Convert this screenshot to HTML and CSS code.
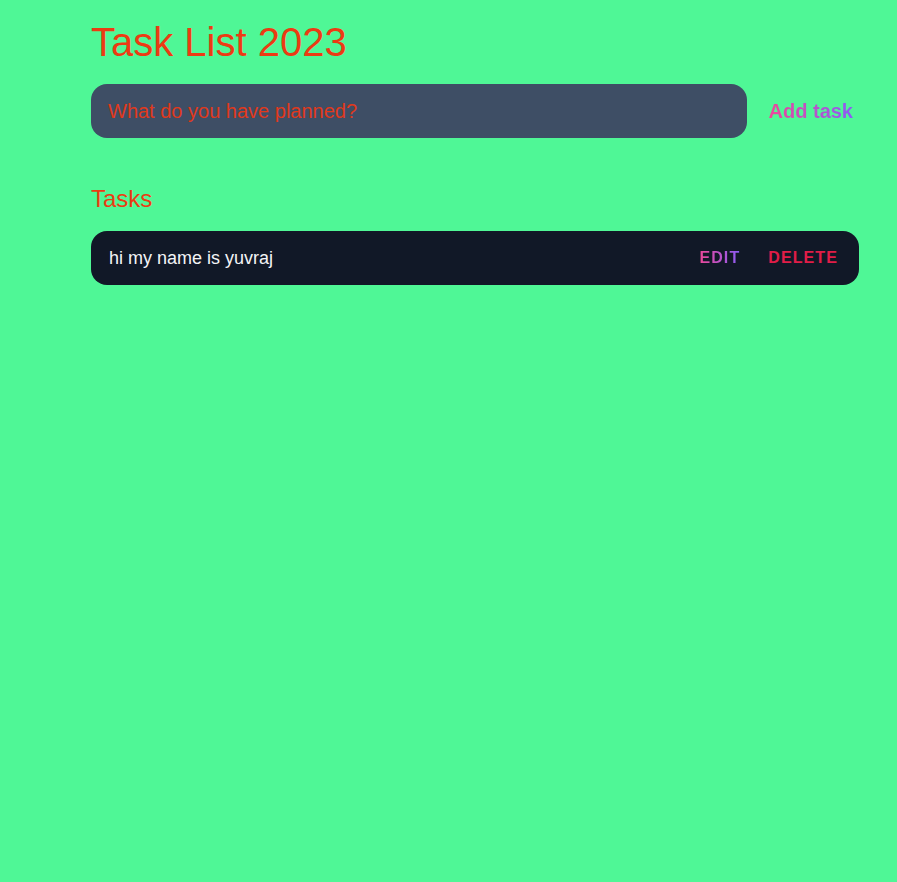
FILE: index.html
```html
<!DOCTYPE html>
<html lang="en">
<head>
<meta charset="utf-8">
<title>Task List 2023</title>
<link rel="stylesheet" href="styles.css">
</head>
<body>
<main class="app">
  <h1 class="title">Task List 2023</h1>
  <form class="new-task" onsubmit="return false">
    <input class="new-task-input" type="text" placeholder="What do you have planned?">
    <button class="new-task-submit" type="submit"><span class="gradient">Add task</span></button>
  </form>
  <section class="task-list">
    <h2 class="section-title">Tasks</h2>
    <div class="tasks">
      <div class="task">
        <div class="task-text">hi my name is yuvraj</div>
        <div class="actions">
          <button class="action edit"><span class="gradient">Edit</span></button>
          <button class="action delete">Delete</button>
        </div>
      </div>
    </div>
  </section>
</main>
</body>
</html>
```
FILE: styles.css
```css
html, body {
  margin: 0;
  padding: 0;
  background: #4ff796;
  font-family: "Liberation Sans", Arial, sans-serif;
}
.app {
  width: 768px;
  margin-left: 91px;
  padding-top: 19px;
}
.title {
  margin: 0;
  font-size: 40px;
  font-weight: 400;
  line-height: 46px;
  color: #ec3b13;
}
.new-task {
  display: flex;
  align-items: center;
  margin-top: 19px;
}
.new-task-input {
  flex: 1;
  min-width: 0;
  height: 54px;
  box-sizing: border-box;
  border: none;
  outline: none;
  border-radius: 16px;
  background: #3e4e65;
  padding: 0 17px;
  font-family: inherit;
  font-size: 20px;
  color: #f3f4f6;
}
.new-task-input::placeholder {
  color: #e0391c;
  opacity: 1;
}
.new-task-submit {
  border: none;
  background: none;
  margin-left: 22px;
  padding: 0 6px 0 0;
  font-family: inherit;
  font-size: 20px;
  font-weight: 700;
  cursor: pointer;
}
.gradient {
  background: linear-gradient(to right, #ec4899, #8b5cf6);
  -webkit-background-clip: text;
  background-clip: text;
  color: transparent;
}
.task-list {
  margin-top: 47px;
}
.section-title {
  margin: 0;
  font-size: 24px;
  font-weight: 400;
  line-height: 28px;
  color: #ec3b13;
}
.tasks {
  margin-top: 18px;
}
.task {
  display: flex;
  align-items: center;
  justify-content: space-between;
  height: 54px;
  box-sizing: border-box;
  padding: 0 21px 0 18px;
  background: #111827;
  border-radius: 16px;
}
.task-text {
  font-size: 18px;
  color: #f3f4f6;
}
.actions {
  display: flex;
  gap: 28px;
}
.action {
  border: none;
  background: none;
  padding: 0;
  font-family: inherit;
  font-size: 16px;
  font-weight: 700;
  text-transform: uppercase;
  letter-spacing: 1.1px;
  cursor: pointer;
}
.delete {
  color: #e11d48;
}
```
